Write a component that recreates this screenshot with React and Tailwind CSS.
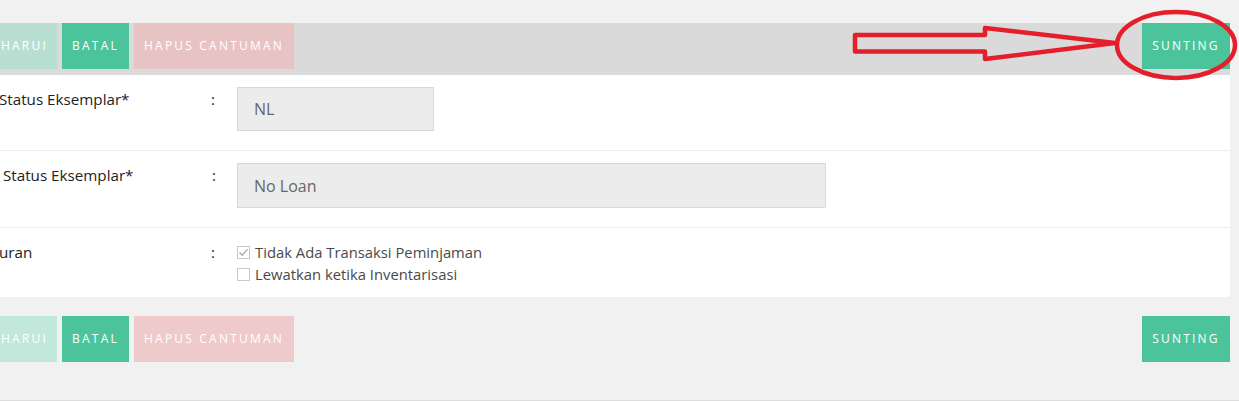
import React from 'react';

const btn = "h-[46px] flex items-center justify-center text-white text-[12px] tracking-[2.2px] whitespace-nowrap";

const ButtonBar = ({ top }) => (
  <div className={`w-[1230px] flex justify-between items-start ${top ? 'h-[52px] bg-[#dadada]' : 'h-[46px]'}`}>
    <div className="flex gap-[5px]">
      <div className={`${btn} w-[57px] justify-start pl-[1px] ${top ? 'bg-[#b9dfd3]' : 'bg-[#c2e8dc]'}`}>HARUI</div>
      <div className={`${btn} w-[67px] bg-[#4cc49b]`}>BATAL</div>
      <div className={`${btn} w-[160px] ${top ? 'bg-[#e8c3c4]' : 'bg-[#efcaca]'}`}>HAPUS CANTUMAN</div>
    </div>
    <div className={`${btn} w-[88px] bg-[#4cc49b]`}>SUNTING</div>
  </div>
);

const Checkbox = ({ checked, label }) => (
  <div className="flex items-center h-[22px]">
    <span className="w-[13px] h-[13px] border border-[#c9c9c9] bg-white flex items-center justify-center mr-[5px]">
      {checked && (
        <svg width="11" height="11" viewBox="0 0 11 11">
          <path d="M1.5 5.5 L4.3 8.3 L9.5 2.2" fill="none" stroke="#a9a9a9" strokeWidth="1.3" />
        </svg>
      )}
    </span>
    <span className="text-[14.8px] text-[#4a4a4a]">{label}</span>
  </div>
);

export default function App() {
  return (
    <div className="w-[1239px] h-[401px] bg-[#f1f1f1] relative overflow-hidden border-b border-[#dcdcdc] pt-[23px] font-['Open_Sans',sans-serif]">
      <ButtonBar top />

      <div className="w-[1230px] bg-white">
        {/* row 1 */}
        <div className="flex pt-[12px] pb-[19px] border-b border-[#eeeeee]">
          <div className="w-[212px] text-[15.2px] leading-[22px] text-[#222] -ml-[1px] mt-[1px] whitespace-nowrap">Status Eksemplar*</div>
          <div className="w-[26px] text-[15px] leading-[22px] text-[#222] mt-[1px]">:</div>
          <div className="w-[197px] h-[44px] bg-[#ececec] border border-[#d9d9d9] flex items-center pl-[16px] text-[16px] text-[#666]">NL</div>
        </div>
        {/* row 2 */}
        <div className="flex pt-[12px] pb-[19px] border-b border-[#eeeeee]">
          <div className="w-[212px] text-[15.2px] leading-[22px] text-[#222] pl-[3px] mt-[1px] whitespace-nowrap">Status Eksemplar*</div>
          <div className="w-[25px] text-[15px] leading-[22px] text-[#222] mt-[1px]">:</div>
          <div className="w-[589px] h-[45px] bg-[#ececec] border border-[#d9d9d9] flex items-center pl-[16px] text-[16px] text-[#666]">No Loan</div>
        </div>
        {/* row 3 */}
        <div className="flex pt-[13px] pb-[12px]">
          <div className="w-[212px] text-[15.2px] leading-[22px] text-[#222] -ml-[1px]">uran</div>
          <div className="w-[26px] text-[15px] leading-[22px] text-[#222]">:</div>
          <div className="flex flex-col">
            <Checkbox checked label="Tidak Ada Transaksi Peminjaman" />
            <Checkbox label="Lewatkan ketika Inventarisasi" />
          </div>
        </div>
      </div>

      <div className="mt-[19px]">
        <ButtonBar />
      </div>

      {/* red annotation */}
      <svg className="absolute inset-0 pointer-events-none" width="1239" height="401" viewBox="0 0 1239 401">
        <path d="M855 35 L985 35 L985 28 L1115 43 L985 59 L985 51.5 L855 51.5 Z" fill="none" stroke="#e31f2b" strokeWidth="4.5" strokeLinejoin="round" />
        <ellipse cx="1176" cy="45" rx="59" ry="33" fill="none" stroke="#e31f2b" strokeWidth="4.5" />
      </svg>
    </div>
  );
}
